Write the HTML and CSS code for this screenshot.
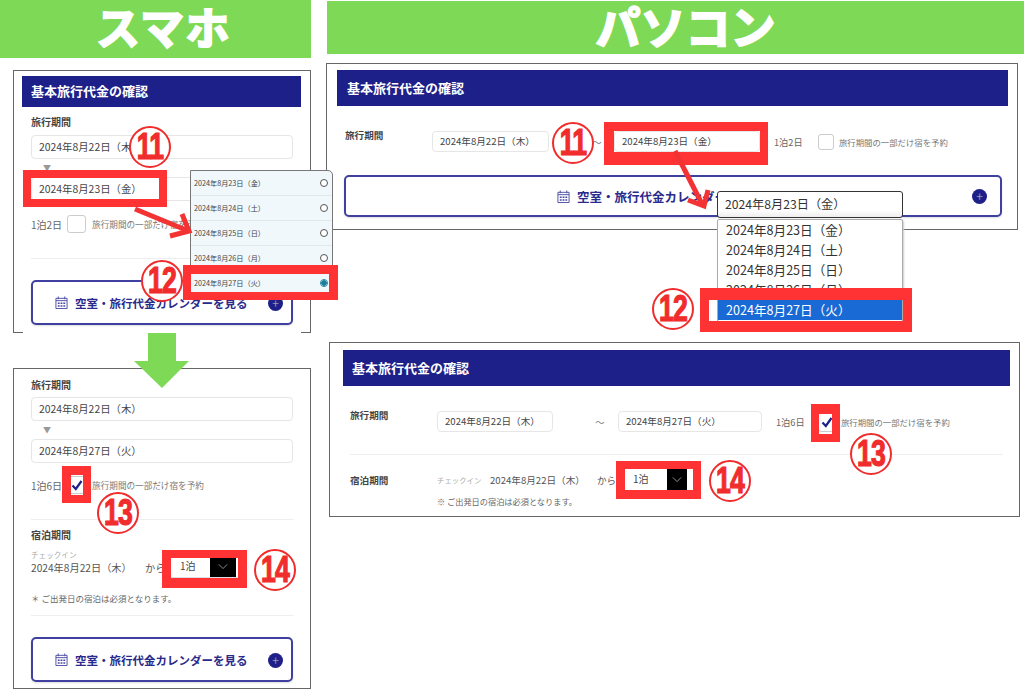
FILE: index.html
```html
<!DOCTYPE html>
<html lang="ja">
<head>
    <meta charset="UTF-8">
    <title>基本旅行代金の確認</title>
    <link rel="stylesheet" href="styles.css">
</head>
<body>
    <svg width="0" height="0" class="defs">
        <symbol id="cal" viewBox="0 0 14 14">
            <path d="M1 2.5h12v11H1z M3.5 .5v3 M10.5 .5v3 M1 5h12" fill="none" stroke="currentColor"/>
            <path d="M3 7h2v1.5H3z M6 7h2v1.5H6z M9 7h2v1.5H9z M3 10h2v1.5H3z M6 10h2v1.5H6z M9 10h2v1.5H9z" fill="currentColor"/>
        </symbol>
        <symbol id="tick" viewBox="0 0 14 14">
            <path d="M2.5 7.5 L5.8 11 L11.5 3" fill="none" stroke="#1e2089" stroke-width="2.2"/>
        </symbol>
        <symbol id="chev" viewBox="0 0 12 8">
            <path d="M1 1.5 L6 6.5 L11 1.5" fill="none" stroke="#aaa" stroke-width="1"/>
        </symbol>
    </svg>

    <div class="canvas">
        <div class="banner banner-sp">スマホ</div>
        <div class="banner banner-pc">パソコン</div>

        <!-- スマホ 上 -->
        <section class="panel sp sp-top">
            <h2 class="head">基本旅行代金の確認</h2>
            <div class="sp-form">
                <div class="sp-label">旅行期間</div>
                <div class="input">2024年8月22日（木）</div>
                <div class="sep">▼</div>
                <div class="input">2024年8月23日（金）</div>
                <div class="sp-nights">
                    <span>1泊2日</span>
                    <span class="check"></span>
                    <span class="check-label">旅行期間の一部だけ宿を予約</span>
                </div>
                <hr class="line line-a">
                <div class="cal-btn">
                    <svg class="cal-icon"><use href="#cal"/></svg>
                    <span>空室・旅行代金カレンダーを見る</span>
                    <span class="plus">+</span>
                </div>
            </div>
        </section>

        <!-- スマホ 下 -->
        <section class="panel sp sp-bottom">
            <div class="sp-form">
                <div class="sp-label">旅行期間</div>
                <div class="input">2024年8月22日（木）</div>
                <div class="sep">▼</div>
                <div class="input">2024年8月27日（火）</div>
                <div class="sp-nights">
                    <span>1泊6日</span>
                    <span class="check"><svg class="tick"><use href="#tick"/></svg></span>
                    <span class="check-label">旅行期間の一部だけ宿を予約</span>
                </div>
                <hr class="line line-a">
                <div class="sp-label stay-label">宿泊期間</div>
                <div class="sp-stay">
                    <div class="sp-stay-date">
                        <div class="checkin">チェックイン</div>
                        <div>2024年8月22日（木）</div>
                    </div>
                    <span class="kara">から</span>
                    <div class="select">
                        <span class="select-text">1泊</span>
                        <span class="select-arrow"><svg class="chev"><use href="#chev"/></svg></span>
                    </div>
                </div>
                <p class="note">＊ ご出発日の宿泊は必須となります。</p>
                <hr class="line line-b">
                <div class="cal-btn">
                    <svg class="cal-icon"><use href="#cal"/></svg>
                    <span>空室・旅行代金カレンダーを見る</span>
                    <span class="plus">+</span>
                </div>
            </div>
        </section>

        <!-- パソコン 上 -->
        <section class="panel pc pc-top">
            <h2 class="head">基本旅行代金の確認</h2>
            <div class="pc-row">
                <div class="pc-label">旅行期間</div>
                <div class="input w117">2024年8月22日（木）</div>
                <span class="tilde tilde-a">～</span>
                <div class="input w146">2024年8月23日（金）</div>
                <span class="nights">1泊2日</span>
                <span class="check check-pc"></span>
                <span class="check-label">旅行期間の一部だけ宿を予約</span>
            </div>
            <div class="cal-btn cal-btn-pc">
                <svg class="cal-icon"><use href="#cal"/></svg>
                <span>空室・旅行代金カレンダーを見る</span>
                <span class="plus">+</span>
            </div>
        </section>

        <!-- パソコン 下 -->
        <section class="panel pc pc-bottom">
            <h2 class="head">基本旅行代金の確認</h2>
            <div class="pc-row">
                <div class="pc-label">旅行期間</div>
                <div class="input w116">2024年8月22日（木）</div>
                <span class="tilde tilde-b">～</span>
                <div class="input w144">2024年8月27日（火）</div>
                <span class="nights">1泊6日</span>
                <span class="check check-pc"><svg class="tick"><use href="#tick"/></svg></span>
                <span class="check-label">旅行期間の一部だけ宿を予約</span>
            </div>
            <hr class="line line-c">
            <div class="pc-row pc-row-stay">
                <div class="pc-label">宿泊期間</div>
                <span class="checkin checkin-pc">チェックイン</span>
                <span class="pc-date">2024年8月22日（木）</span>
                <span class="kara-pc">から</span>
                <div class="select select-pc">
                    <span class="select-text">1泊</span>
                    <span class="select-arrow"><svg class="chev"><use href="#chev"/></svg></span>
                </div>
            </div>
            <p class="note note-pc">※ ご出発日の宿泊は必須となります。</p>
        </section>

        <!-- スマホのプルダウン -->
        <ul class="popup">
            <li>2024年8月23日（金）<i class="radio"></i></li>
            <li>2024年8月24日（土）<i class="radio"></i></li>
            <li>2024年8月25日（日）<i class="radio"></i></li>
            <li>2024年8月26日（月）<i class="radio"></i></li>
            <li>2024年8月27日（火）<i class="radio on"></i></li>
        </ul>

        <!-- パソコンのプルダウン -->
        <div class="dropdown">
            <div class="dropdown-head">2024年8月23日（金）</div>
            <ul class="dropdown-list">
                <li>2024年8月23日（金）</li>
                <li>2024年8月24日（土）</li>
                <li>2024年8月25日（日）</li>
                <li>2024年8月26日（月）</li>
                <li class="selected">2024年8月27日（火）</li>
            </ul>
        </div>

        <!-- 赤枠 -->
        <div class="red r1"></div>
        <div class="red r2"></div>
        <div class="red r3"></div>
        <div class="red r4"></div>
        <div class="red r5"></div>
        <div class="red r6"></div>
        <div class="red r7"></div>
        <div class="red r8"></div>

        <!-- 丸数字 -->
        <div class="num n1"><span>11</span></div>
        <div class="num n2"><span>12</span></div>
        <div class="num n3"><span>13</span></div>
        <div class="num n4"><span>14</span></div>
        <div class="num n5"><span>11</span></div>
        <div class="num n6"><span>12</span></div>
        <div class="num n7"><span>13</span></div>
        <div class="num n8"><span>14</span></div>

        <!-- 矢印 -->
        <svg class="arrows" width="1024" height="699">
            <polygon points="148,333 176,333 176,361 189,361 162,388 134,361 148,361" fill="#7ed957"/>
            <g fill="none" stroke="#f33333" stroke-width="5">
                <path d="M135 209 L186 230"/>
                <path d="M170 236 L189 231 L182 214"/>
                <path d="M675 151 L702 204"/>
                <path d="M688 200 L704 206 L708 190"/>
            </g>
        </svg>
    </div>
</body>
</html>
```

FILE: styles.css
```css
* { box-sizing: border-box; }
body { margin: 0; background: #fff; font-family: "Noto Sans CJK JP", "Noto Sans", sans-serif; color: #444; }
.defs { position: absolute; }
.canvas { position: relative; width: 1024px; height: 699px; overflow: hidden; }

/* 緑の見出し */
.banner { position: absolute; background: #7ed957; color: #fff; font-weight: 700; display: flex; justify-content: center; align-items: center; line-height: 1; -webkit-text-stroke: 2px #fff; }
.banner-sp { left: 0; top: 0; width: 311px; height: 58px; padding: 0 0 6px 16px; font-size: 44px; letter-spacing: 1.5px; }
.banner-pc { left: 327px; top: 1px; width: 697px; height: 53px; padding: 0 0 4px 20px; font-size: 45px; }

/* パネル（貼り付けた画面） */
.panel { position: absolute; background: #fff; border: 1px solid #666; }
.sp-top { left: 13px; top: 70px; width: 298px; height: 263px; padding: 5px 9px 0 8px; border-bottom: 0; }
.sp-top::before, .sp-top::after { content: ""; position: absolute; bottom: 0; width: 9px; height: 1px; background: #666; }
.sp-top::before { left: 0; }
.sp-top::after { right: 0; }
.sp-bottom { left: 13px; top: 368px; width: 298px; height: 321px; padding: 0 9px 0 8px; }
.pc-top { left: 326px; top: 63px; width: 692px; height: 167px; padding: 6px 9px 6px 10px; }
.pc-bottom { left: 329px; top: 342px; width: 691px; height: 175px; padding: 7px 9px 0 13px; }

.head { margin: 0; background: #1e2089; color: #fff; font-size: 13px; font-weight: 700; display: flex; align-items: center; }
.sp .head { height: 31px; padding: 0 0 3px 9px; }
.pc .head { height: 36px; padding: 0 0 1px 9px; }
.pc-top .head { padding-left: 10px; }

/* スマホのフォーム */
.sp-form { padding: 0 8px 0 9px; font-size: 11px; }
.sp-label { font-size: 10px; font-weight: 700; line-height: 14px; height: 14px; margin-top: 8px; margin-bottom: 6px; color: #444; }
.sp-bottom .sp-label { margin-top: 9px; margin-bottom: 5px; }
.sp-bottom .stay-label { margin-top: 8px; margin-bottom: 6px; }
.input { height: 24px; border: 1px solid #e6e6e6; border-radius: 4px; padding-left: 7px; font-size: 10.4px; line-height: 22px; background: #fff; color: #444; white-space: nowrap; }
.sep { height: 18px; padding-left: 12px; font-size: 8px; line-height: 18px; color: #999; }
.sp-nights { display: flex; align-items: center; height: 18px; margin-top: 14px; font-size: 10px; color: #666; }
.sp-bottom .sp-nights { margin-top: 13px; }
.check { width: 19px; height: 18px; margin: 0 6px 0 5px; border: 1px solid #ccc; border-radius: 3px; display: flex; align-items: center; justify-content: center; background: #fff; flex: none; }
.check-label { font-size: 8.6px; color: #777; white-space: nowrap; }
.tick { width: 14px; height: 14px; }
hr.line { border: 0; border-top: 1px solid #eee; margin: 0; }
.line-a { margin-top: 25px !important; }
.line-b { margin-top: 11px !important; }
.sp-top .cal-btn { margin-top: 21px; }
.sp-bottom .cal-btn { margin-top: 21px; }

.cal-btn { position: relative; height: 45px; border: 2px solid #4040a0; border-radius: 5px; display: flex; align-items: center; padding-left: 22px; color: #2a2a8c; font-size: 11.5px; font-weight: 700; box-shadow: 0 1px 2px #ddd; white-space: nowrap; background: #fff; }
.cal-icon { width: 13px; height: 13px; margin-right: 7px; color: #4a4aa0; flex: none; }
.plus { position: absolute; right: 8px; top: 50%; width: 15px; height: 15px; margin-top: -7px; border-radius: 50%; background: #1e2089; color: #99a; font-size: 12px; line-height: 14px; text-align: center; font-weight: 400; }

.sp-stay { display: flex; align-items: flex-end; height: 30px; font-size: 10.2px; color: #555; }
.sp-stay-date { width: 114px; margin-bottom: 4px; line-height: 13px; }
.checkin { font-size: 7.6px; color: #aaa; line-height: 12px; height: 12px; white-space: nowrap; }
.kara { width: 26px; margin-bottom: 4px; line-height: 13px; font-size: 10.2px; }
.select { display: flex; width: 67px; height: 21px; padding-right: 2px; background: #fff; font-size: 10px; flex: none; margin-bottom: 1px; box-shadow: 0 1px 1px #ddd; }
.select-text { flex: 1; padding-left: 9px; line-height: 19px; color: #444; }
.select-arrow { width: 26px; background: #000; display: flex; align-items: center; justify-content: center; }
.chev { width: 10px; height: 7px; }
.note { margin: 14px 0 0; height: 12px; font-size: 8.5px; line-height: 12px; color: #666; }

/* パソコンの行 */
.pc-row { display: flex; align-items: center; height: 21px; margin-top: 25px; padding-left: 7px; font-size: 9.6px; white-space: nowrap; }
.pc-top .pc-row { padding-left: 8px; }
.pc-label { width: 87px; font-size: 9.6px; font-weight: 700; color: #444; align-self: flex-start; line-height: 10px; flex: none; margin-top: -1px; }
.pc-row-stay .pc-label { align-self: center; margin-top: 0; }
.pc-row .input { height: 21px; line-height: 19px; font-size: 9.6px; padding-left: 7px; }
.w117 { width: 117px; }
.w146 { width: 146px; }
.w116 { width: 116px; }
.w144 { width: 144px; }
.tilde { color: #777; font-size: 9.5px; flex: none; }
.tilde-a { width: 65px; padding-left: 43px; }
.tilde-b { width: 65px; padding-left: 42px; }
.nights { margin-left: 14px; width: 30px; font-size: 9.2px; color: #666; }
.check-pc { width: 16px; height: 16px; margin: 0 5px 0 14px; }
.pc-row .check-label { font-size: 8.4px; }
.pc-bottom .check-pc { margin: 0 5px 0 12px; width: 18px; height: 20px; }
.cal-btn-pc { margin: 23px 6px 0 7px; height: 42px; padding-left: 211px; font-size: 12.5px; }
.cal-btn-pc .plus { right: 13px; }

.line-c { margin-top: 22px !important; margin-left: 7px !important; margin-right: 7px !important; }
.pc-row-stay { margin-top: 14px; }
.checkin-pc { width: 53px; font-size: 7.4px; flex: none; }
.pc-date { width: 107px; color: #555; }
.kara-pc { width: 28px; color: #555; font-size: 9.5px; }
.select-pc { width: 68px; margin: 0; height: 21px; }
.select-pc .select-text { padding-left: 8px; line-height: 19px; }
.select-pc .select-arrow { width: 20px; margin-right: 4px; }
.note-pc { margin: 5px 0 0 94px; font-size: 8.2px; }

/* スマホのプルダウン */
.popup { position: absolute; left: 190px; top: 170px; width: 143px; margin: 0; padding: 0; list-style: none; background: #f0f8fb; border: 1px solid #777; border-radius: 0 5px 0 0; font-size: 7.2px; color: #444; }
.popup li { display: flex; align-items: center; justify-content: space-between; height: 25px; padding: 0 4px 0 3px; border-bottom: 1px solid #e2e8ea; }
.radio { width: 8px; height: 8px; border: 1px solid #555; border-radius: 50%; background: #fff; }
.radio.on { border-color: #1a7f9c; background: radial-gradient(circle, #1a7f9c 0 2.5px, #fff 3px); }

/* パソコンのプルダウン */
.dropdown { position: absolute; left: 717px; top: 191px; width: 186px; font-size: 12.6px; color: #333; }
.dropdown-head { height: 27px; border: 1.5px solid #333; border-radius: 3px; padding-left: 7px; font-size: 12.2px; line-height: 24px; background: linear-gradient(#fff 70%, #eee); }
.dropdown-list { margin: 1px 0 0; padding: 0 0 1px; list-style: none; background: #fff; border: 1px solid #aaa; border-radius: 2px; box-shadow: 1px 1px 2px #ccc; }
.dropdown-list li { height: 20px; padding-left: 8px; line-height: 20px; }
.dropdown-list .selected { background: #1a6ad6; color: #fff; }

/* 赤枠 */
.red { position: absolute; border: 8px solid #ff3333; }
.r1 { left: 23px; top: 170px; width: 144px; height: 37px; }
.r2 { left: 183px; top: 265px; width: 155px; height: 35px; border-width: 9px 9px 8px 8px; }
.r3 { left: 62px; top: 466px; width: 29px; height: 37px; border-width: 9px 8px 8px 9px; }
.r4 { left: 162px; top: 550px; width: 85px; height: 38px; border-width: 8px 9px 10px 9px; }
.r5 { left: 604px; top: 122px; width: 164px; height: 43px; border-width: 9px 8px 13px 10px; }
.r6 { left: 700px; top: 288px; width: 212px; height: 44px; border-width: 12px 9px 11px 9px; }
.r7 { left: 811px; top: 404px; width: 29px; height: 38px; border-width: 10px 8px 8px 8px; }
.r8 { left: 616px; top: 461px; width: 85px; height: 38px; border-width: 8px 8px 9px 9px; }

/* 丸数字 */
.num { position: absolute; width: 42px; height: 42px; border: 2.5px solid #f02c2c; border-radius: 50%; background: #fff; color: #f02c2c; display: flex; align-items: center; justify-content: center; font-family: "Liberation Sans", sans-serif; font-weight: 700; font-size: 36px; line-height: 1; -webkit-text-stroke: 1.2px #f02c2c; }
.num span { display: block; letter-spacing: -1px; transform: scaleX(.74); }
.n1 { left: 129px; top: 126px; }
.n2 { left: 141px; top: 260px; }
.n3 { left: 97px; top: 492px; }
.n4 { left: 254px; top: 549px; }
.n5 { left: 552px; top: 122px; }
.n6 { left: 652px; top: 288px; }
.n7 { left: 850px; top: 433px; }
.n8 { left: 709px; top: 460px; }

.arrows { position: absolute; left: 0; top: 0; pointer-events: none; }
```
